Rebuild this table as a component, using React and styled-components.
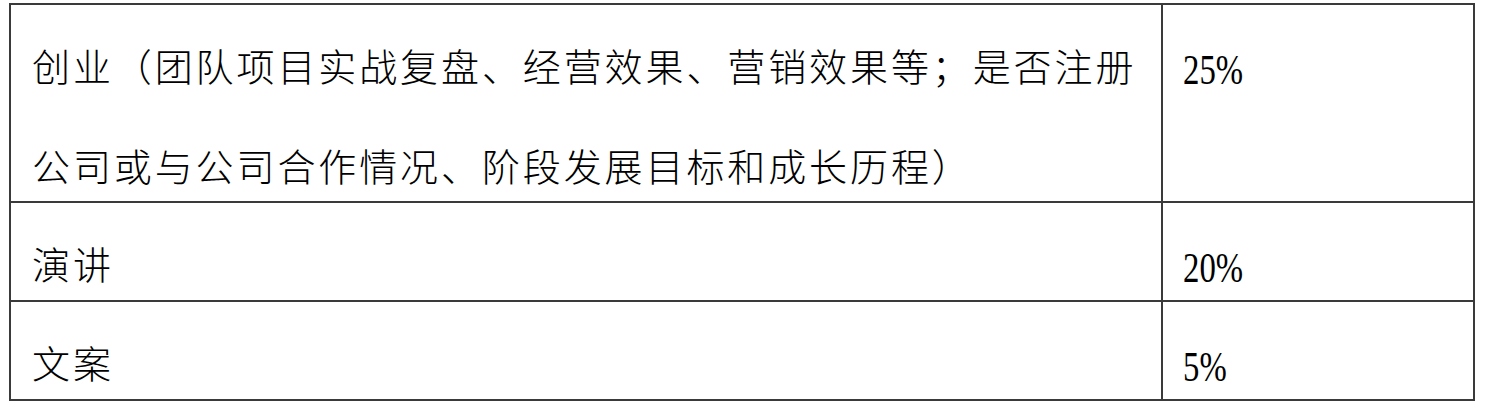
import React from 'react';
import styled, { createGlobalStyle } from 'styled-components';

const GlobalStyle = createGlobalStyle`
  html, body {
    margin: 0;
    padding: 0;
    background: #ffffff;
  }
  body {
    font-family: "Noto Sans CJK SC", "Noto Sans", sans-serif;
    color: #000000;
  }
`;

const Page = styled.div`
  padding: 3px 9px;
`;

const Table = styled.div`
  display: grid;
  grid-template-columns: 1152px 312px;
  grid-template-rows: 198px 99px 99px;
  width: max-content;
  border-top: 2px solid #3a3a3a;
  border-left: 2px solid #3a3a3a;
`;

const Cell = styled.div`
  border-right: 2px solid #3a3a3a;
  border-bottom: 2px solid #3a3a3a;
  padding-left: ${({ $pad }) => $pad || 21}px;
  overflow: hidden;
`;

const Line = styled.div`
  box-sizing: border-box;
  height: 100px;
  padding-top: 41px;
  font-size: 38px;
  font-weight: 300;
  line-height: 38px;
  letter-spacing: 2.9px;
  white-space: nowrap;
`;

const Num = styled.div`
  box-sizing: border-box;
  height: 100px;
  padding-top: 44px;
  font-family: "Liberation Serif", "Times New Roman", serif;
  font-size: 42px;
  line-height: 42px;
  white-space: nowrap;

  span {
    display: inline-block;
    transform: scaleX(0.78);
    transform-origin: left center;
  }
`;

const rows = [
  {
    lines: [
      '创业（团队项目实战复盘、经营效果、营销效果等；是否注册',
      '公司或与公司合作情况、阶段发展目标和成长历程）',
    ],
    value: '25%',
  },
  { lines: ['演讲'], value: '20%' },
  { lines: ['文案'], value: '5%' },
];

const App = () => {
  return (
    <Page>
      <GlobalStyle />
      <Table>
        {rows.map((row) => (
          <React.Fragment key={row.value}>
            <Cell>
              {row.lines.map((line) => (
                <Line key={line}>{line}</Line>
              ))}
            </Cell>
            <Cell $pad={20}>
              <Num>
                <span>{row.value}</span>
              </Num>
            </Cell>
          </React.Fragment>
        ))}
      </Table>
    </Page>
  );
};

export default App;
